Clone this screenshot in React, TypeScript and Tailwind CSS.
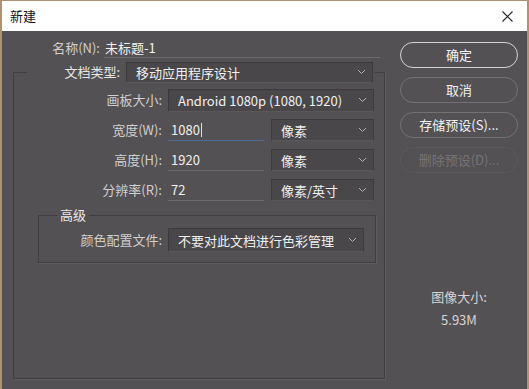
import React from "react";

const font = { fontFamily: '"Noto Sans CJK SC", "Noto Sans", sans-serif' };

function Chevron() {
  return (
    <svg width="9" height="6" viewBox="0 0 9 6" className="shrink-0">
      <polyline points="1,1 4.5,4.5 8,1" fill="none" stroke="#b3b0b2" strokeWidth="1" />
    </svg>
  );
}

function Select({ value, className }: { value: string; className: string }) {
  return (
    <div
      className={`flex items-center justify-between bg-[#4a474a] border border-[#3c3a3c] border-b-[#5a575a] pl-[9px] pr-[6px] text-[13px] text-[#f0f0f0] ${className}`}
    >
      <span className="leading-none">{value}</span>
      <Chevron />
    </div>
  );
}

function Field({ value, focused }: { value: string; focused?: boolean }) {
  return (
    <div
      className={`w-[96px] h-[22px] flex items-center border-b text-[13px] text-[#f0f0f0] pl-[3px] ${
        focused ? "border-[#4c6c98]" : "border-[#6e6b6d]"
      }`}
    >
      {value}
      {focused && <span className="w-px h-[14px] bg-[#e0e0e0] ml-px" />}
    </div>
  );
}

function Row({ label, children }: { label: string; children: React.ReactNode }) {
  return (
    <div className="flex items-center h-[22px]">
      <div className="w-[154px] text-right text-[13px] text-[#cfcfcf] pr-[6px]">{label}</div>
      {children}
    </div>
  );
}

function PillButton({ label, tone }: { label: string; tone: "primary" | "normal" | "disabled" }) {
  const styles = {
    primary: "border-[1.5px] border-[#d4d4d4] text-[#f4f4f4]",
    normal: "border border-[#747174] text-[#f0f0f0]",
    disabled: "border border-[#5c595c] text-[#767376]",
  }[tone];
  return (
    <div className={`h-[26px] w-[118px] rounded-full flex items-center justify-center text-[13px] ${styles}`}>
      {label}
    </div>
  );
}

export default function App() {
  return (
    <div
      className="w-[529px] h-[389px] flex flex-col border-t border-x-2 border-[#b09272] bg-[#545154]"
      style={font}
    >
      {/* Title bar */}
      <div className="h-[30px] bg-white flex items-center justify-between pl-[8px] pr-[14px] shrink-0">
        <span className="text-[13px] text-[#111]">新建</span>
        <svg width="11" height="11" viewBox="0 0 11 11">
          <path d="M0.5 0.5 L10.5 10.5 M10.5 0.5 L0.5 10.5" stroke="#222" strokeWidth="1.1" />
        </svg>
      </div>

      <div className="flex-1 flex">
        {/* Left column */}
        <div className="w-[386px] flex flex-col">
          <div className="flex items-center h-[20px] mt-[7px]">
            <div className="w-[98px] text-right text-[13px] text-[#cfcfcf]">名称(N):</div>
            <div className="ml-[4px] w-[276px] h-[20px] flex items-center border-b border-[#6e6b6d] text-[13px] text-[#f0f0f0] pl-px">
              未标题-1
            </div>
          </div>

          <fieldset className="ml-[11px] w-[372px] flex-1 mb-[10px] mt-[4px] border border-[#3f3d3f] shadow-[1px_1px_0_#5f5c5f]">
            <legend className="ml-[13px] pr-[2px] bg-[#545154]">
              <div className="flex items-center h-[20px]">
                <div className="w-[99px] text-right text-[13px] text-[#e6e6e6] pr-[6px]">文档类型:</div>
                <Select value="移动应用程序设计" className="w-[247px] h-[21px]" />
              </div>
            </legend>

            <div className="flex flex-col gap-[8px] pt-[7px]">
              <Row label="画板大小:">
                <Select value="Android 1080p (1080, 1920)" className="w-[206px] h-[23px]" />
              </Row>
              <Row label="宽度(W):">
                <Field value="1080" focused />
                <Select value="像素" className="ml-[7px] w-[103px] h-[22px]" />
              </Row>
              <Row label="高度(H):">
                <Field value="1920" />
                <Select value="像素" className="ml-[7px] w-[103px] h-[22px]" />
              </Row>
              <Row label="分辨率(R):">
                <Field value="72" />
                <Select value="像素/英寸" className="ml-[7px] w-[103px] h-[22px]" />
              </Row>
            </div>

            <fieldset className="ml-[24px] w-[338px] mt-[6px] border border-[#3f3d3f] shadow-[1px_1px_0_#5f5c5f] pb-[10px]">
              <legend className="ml-[18px] px-[3px] text-[13px] text-[#eaeaea] leading-[16px]">高级</legend>
              <div className="flex items-center h-[24px] mt-[5px]">
                <div className="w-[129px] text-right text-[13px] text-[#cfcfcf] pr-[6px]">颜色配置文件:</div>
                <Select value="不要对此文档进行色彩管理" className="w-[196px] h-[24px]" />
              </div>
            </fieldset>
          </fieldset>
        </div>

        {/* Right column */}
        <div className="ml-[12px] w-[118px] flex flex-col">
          <div className="mt-[11px] flex flex-col gap-[9px]">
            <PillButton label="确定" tone="primary" />
            <PillButton label="取消" tone="normal" />
            <PillButton label="存储预设(S)..." tone="normal" />
            <PillButton label="删除预设(D)..." tone="disabled" />
          </div>
          <div className="mt-[115px] flex flex-col items-center text-[13px] text-[#d4d4d4] leading-[18px] gap-[5px]">
            <span>图像大小:</span>
            <span>5.93M</span>
          </div>
        </div>
      </div>
    </div>
  );
}
